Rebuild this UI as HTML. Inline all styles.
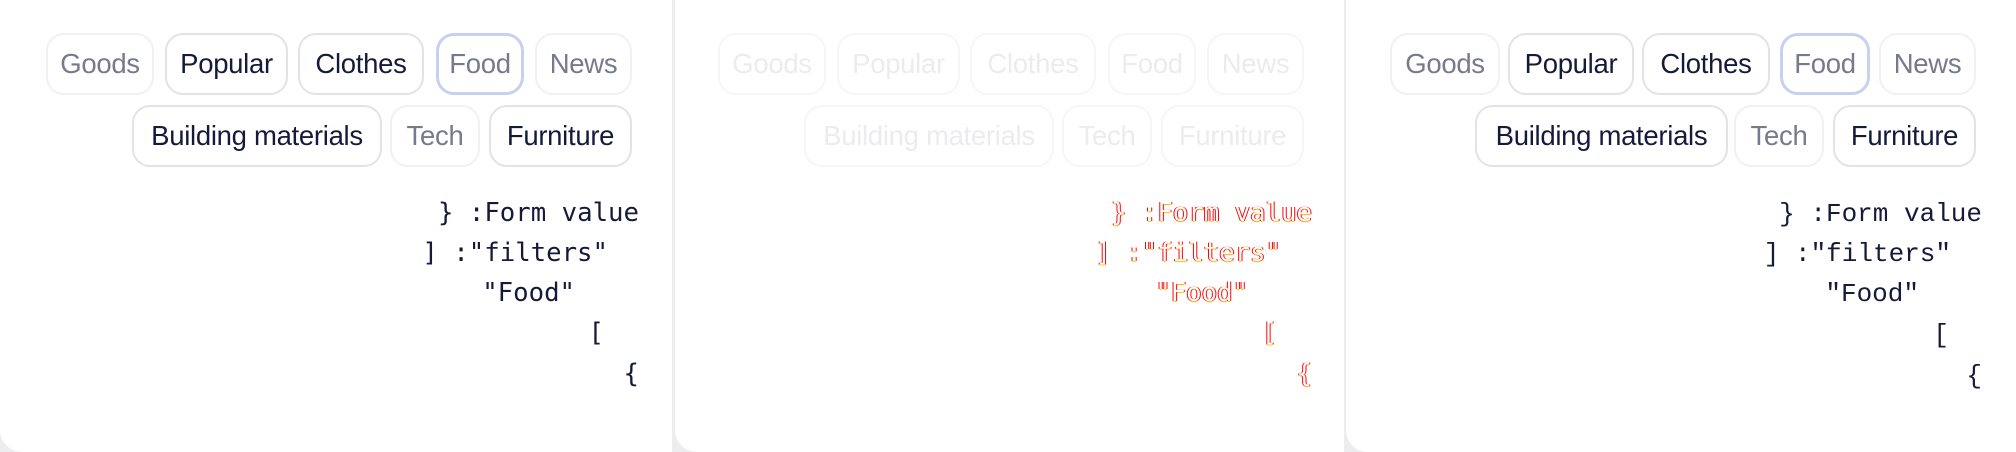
<!DOCTYPE html>
<html><head><meta charset="utf-8"><style>
html,body{margin:0;padding:0;width:2016px;height:452px;overflow:hidden;background:#ededf0;position:relative;font-family:"Liberation Sans",sans-serif}
.panel{position:absolute;top:0;height:452px;background:#fff;border-radius:0 0 0 22px}
.chip{position:absolute;box-sizing:border-box;height:62px;border:2px solid #e3e3e7;border-radius:18px;font-size:27.5px;line-height:58px;text-align:center;color:#161a3a;background:#fff;letter-spacing:-0.3px}
.chip.dim{color:#767a8c;border-color:#f1f1f3}
.chip.sel{color:#767a8c;border:3px solid #c8d0f0;line-height:56px}
.r2{top:105px}.r1{top:33px}
.code{position:absolute;font-family:"DejaVu Sans Mono",monospace;font-size:25.7px;color:#161a3a;white-space:pre;line-height:30px}
.p3 .code{font-family:"Courier New","Nimbus Mono PS","FreeMono","Liberation Mono",monospace;font-size:26px}
.p2 .chip{color:#ececee;border-color:#f6f6f7;background:transparent}
.p2 .code{color:#fff;text-shadow:1px 0 #f00,-1px 0 #f00,0 1px #fc0}
</style></head><body>
<div class="panel p1" style="left:0;width:672px">
 <div class="chip dim r1" style="left:46px;width:108px">Goods</div>
 <div class="chip r1" style="left:165px;width:123px">Popular</div>
 <div class="chip r1" style="left:298px;width:126px">Clothes</div>
 <div class="chip sel r1" style="left:436px;width:88px">Food</div>
 <div class="chip dim r1" style="left:535px;width:97px">News</div>
 <div class="chip r2" style="left:132px;width:250px">Building materials</div>
 <div class="chip dim r2" style="left:390px;width:90px">Tech</div>
 <div class="chip r2" style="left:489px;width:143px">Furniture</div>
 <div class="code" style="right:33px;top:198px">} :Form value</div>
 <div class="code" style="right:64px;top:238px">] :"filters"</div>
 <div class="code" style="right:97px;top:278px">"Food"</div>
 <div class="code" style="right:68px;top:318px">[</div>
 <div class="code" style="right:33px;top:359px">{</div>
</div>
<div class="panel p2" style="left:675px;width:669px">
 <div class="chip dim r1" style="left:43px;width:108px">Goods</div>
 <div class="chip r1" style="left:162px;width:123px">Popular</div>
 <div class="chip r1" style="left:295px;width:126px">Clothes</div>
 <div class="chip r1" style="left:433px;width:88px">Food</div>
 <div class="chip r1" style="left:532px;width:97px">News</div>
 <div class="chip r2" style="left:129px;width:250px">Building materials</div>
 <div class="chip r2" style="left:387px;width:90px">Tech</div>
 <div class="chip r2" style="left:486px;width:143px">Furniture</div>
 <div class="code" style="right:32px;top:198px">} :Form value</div>
 <div class="code" style="right:63px;top:238px">] :"filters"</div>
 <div class="code" style="right:96px;top:278px">"Food"</div>
 <div class="code" style="right:67px;top:318px">[</div>
 <div class="code" style="right:32px;top:359px">{</div>
</div>
<div class="panel p3" style="left:1346px;width:670px">
 <div class="chip dim r1" style="left:44px;width:110px">Goods</div>
 <div class="chip r1" style="left:162px;width:126px">Popular</div>
 <div class="chip r1" style="left:296px;width:128px">Clothes</div>
 <div class="chip sel r1" style="left:434px;width:90px">Food</div>
 <div class="chip dim r1" style="left:533px;width:97px">News</div>
 <div class="chip r2" style="left:129px;width:253px">Building materials</div>
 <div class="chip dim r2" style="left:388px;width:90px">Tech</div>
 <div class="chip r2" style="left:487px;width:143px">Furniture</div>
 <div class="code" style="right:34px;top:199px">} :Form value</div>
 <div class="code" style="right:65px;top:239px">] :"filters"</div>
 <div class="code" style="right:97px;top:279px">"Food"</div>
 <div class="code" style="right:67px;top:320px">[</div>
 <div class="code" style="right:34px;top:361px">{</div>
</div>
</body></html>
